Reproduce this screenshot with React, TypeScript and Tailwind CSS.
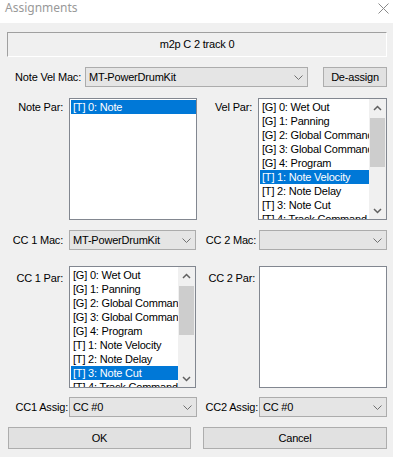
import React from 'react';

const paramItems = [
  '[G] 0: Wet Out',
  '[G] 1: Panning',
  '[G] 2: Global Command',
  '[G] 3: Global Command',
  '[G] 4: Program',
  '[T] 1: Note Velocity',
  '[T] 2: Note Delay',
  '[T] 3: Note Cut',
  '[T] 4: Track Command',
];

function Chevron() {
  return (
    <svg width="9" height="5" viewBox="0 0 9 5" className="shrink-0">
      <path d="M0.5 0.5 L4.5 4.5 L8.5 0.5" fill="none" stroke="#707070" strokeWidth="1" />
    </svg>
  );
}

function Combo({ value, className }: { value?: string; className: string }) {
  return (
    <div className={`flex h-[20px] items-center border border-[#acacac] bg-[#e5e5e5] pl-[3px] pr-[4px] ${className}`}>
      <span className="flex-1 overflow-hidden whitespace-nowrap">{value}</span>
      <Chevron />
    </div>
  );
}

function Button({ label, className }: { label: string; className: string }) {
  return (
    <div className={`flex items-center justify-center border border-[#adadad] bg-[#e1e1e1] ${className}`}>
      {label}
    </div>
  );
}

function Arrow({ up }: { up?: boolean }) {
  return (
    <svg width="9" height="6" viewBox="0 0 9 6">
      <path
        d={up ? 'M1 5 L4.5 1.5 L8 5' : 'M1 1 L4.5 4.5 L8 1'}
        fill="none"
        stroke="#606060"
        strokeWidth="1.5"
      />
    </svg>
  );
}

function Scrollbar() {
  return (
    <div className="flex w-[17px] shrink-0 flex-col bg-[#f0f0f0]">
      <div className="flex h-[17px] items-center justify-center">
        <Arrow up />
      </div>
      <div className="mx-[1px] mt-[2px] h-[49px] bg-[#cdcdcd]" />
      <div className="flex-1" />
      <div className="flex h-[17px] items-center justify-center">
        <Arrow />
      </div>
    </div>
  );
}

function ListBox({
  items,
  selected,
  scroll,
  className,
}: {
  items: string[];
  selected: number;
  scroll?: boolean;
  className: string;
}) {
  return (
    <div className={`flex h-[122px] overflow-hidden border border-[#828790] bg-white ${className}`}>
      <div className="flex-1 overflow-hidden pl-[1px] pt-[1px]">
        {items.map((t, i) => (
          <div
            key={i}
            className={`h-[14px] whitespace-nowrap pl-[2px] leading-[14px] ${
              i === selected ? 'bg-[#0078d7] text-white' : 'text-black'
            }`}
          >
            {t}
          </div>
        ))}
      </div>
      {scroll && <Scrollbar />}
    </div>
  );
}

export default function App() {
  return (
    <div className="h-[457px] w-[393px] overflow-hidden bg-[#f0f0f0] font-['Liberation_Sans',Arial,sans-serif] text-[11px] tracking-[-0.2px] text-black">
      {/* Title bar */}
      <div className="flex h-[23px] items-start bg-white tracking-normal">
        <div className="pl-[5px] font-['Noto_Sans',sans-serif] text-[12px] leading-[16px] text-[#999999]">
          Assignments
        </div>
        <svg width="11" height="11" viewBox="0 0 11 11" className="ml-auto mr-[4px] mt-[3px]">
          <path d="M0.5 0.5 L10.5 10.5 M10.5 0.5 L0.5 10.5" stroke="#8a8a8a" strokeWidth="1" />
        </svg>
      </div>

      <div className="pl-[7px] pr-[6px]">
        <div className="mt-[9px] flex h-[25px] items-center justify-center border border-b-white border-l-[#a0a0a0] border-r-white border-t-[#a0a0a0]">
          m2p C 2 track 0
        </div>

        {/* Note Vel Mac */}
        <div className="mt-[10px] flex h-[20px] items-center">
          <div className="w-[78px] pr-[4px] text-right">Note Vel Mac:</div>
          <Combo value="MT-PowerDrumKit" className="w-[223px]" />
          <Button label="De-assign" className="ml-[15px] h-[20px] w-[64px]" />
        </div>

        {/* Note / Vel Par */}
        <div className="mt-[11px] flex items-start">
          <div className="w-[62px] pr-[6px] pt-[2px] text-right leading-[14px]">Note Par:</div>
          <ListBox items={['[T] 0: Note']} selected={0} className="w-[128px]" />
          <div className="w-[61px] pr-[6px] pt-[2px] text-right leading-[14px]">Vel Par:</div>
          <ListBox items={paramItems} selected={5} scroll className="w-[129px]" />
        </div>

        {/* CC Mac */}
        <div className="mt-[10px] flex h-[20px] items-center">
          <div className="w-[62px] pr-[6px] text-right">CC 1 Mac:</div>
          <Combo value="MT-PowerDrumKit" className="w-[127px]" />
          <div className="w-[63px] pr-[3px] text-right">CC 2 Mac:</div>
          <Combo className="w-[128px]" />
        </div>

        {/* CC Par */}
        <div className="mt-[16px] flex items-start">
          <div className="w-[62px] pr-[6px] pt-[5px] text-right leading-[14px]">CC 1 Par:</div>
          <ListBox items={paramItems} selected={7} scroll className="w-[127px]" />
          <div className="w-[63px] pr-[4px] pt-[5px] text-right leading-[14px]">CC 2 Par:</div>
          <ListBox items={[]} selected={-1} className="w-[128px]" />
        </div>

        {/* CC Assig */}
        <div className="mt-[9px] flex h-[20px] items-center">
          <div className="w-[62px] pr-[1px] text-right">CC1 Assig:</div>
          <Combo value="CC #0" className="w-[128px]" />
          <div className="w-[62px] pr-[1px] text-right">CC2 Assig:</div>
          <Combo value="CC #0" className="w-[128px]" />
        </div>

        {/* OK / Cancel */}
        <div className="mt-[10px] flex">
          <Button label="OK" className="ml-[1px] h-[22px] w-[183px]" />
          <Button label="Cancel" className="ml-[12px] h-[22px] w-[184px]" />
        </div>
      </div>
    </div>
  );
}
